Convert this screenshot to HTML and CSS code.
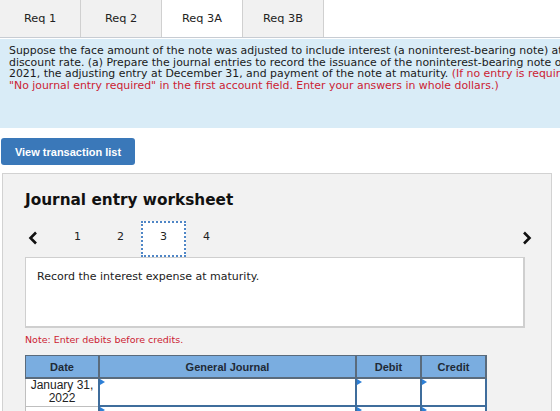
FILE: index.html
```html
<!DOCTYPE html>
<html lang="en">
<head>
  <meta charset="UTF-8" />
  <meta name="viewport" content="width=device-width, initial-scale=1" />
  <title>Journal entry worksheet</title>
  <link rel="stylesheet" href="styles.css">
</head>
<body>

  <!-- Pestañas de requisitos -->
  <div class="tabs">
    <div class="tab">Req 1</div>
    <div class="tab">Req 2</div>
    <div class="tab active">Req 3A</div>
    <div class="tab">Req 3B</div>
  </div>

  <!-- Enunciado -->
  <div class="question">
    <p>
      Suppose the face amount of the note was adjusted to include interest (a noninterest-bearing note) at a 12%<br />
      discount rate. (a) Prepare the journal entries to record the issuance of the noninterest-bearing note on January 1,<br />
      2021, the adjusting entry at December 31, and payment of the note at maturity. <span class="red">(If no entry is required for a transaction/event, select</span><br />
      <span class="red">"No journal entry required" in the first account field. Enter your answers in whole dollars.)</span>
    </p>
  </div>

  <button class="btn-list">View transaction list</button>

  <!-- Hoja de asientos -->
  <div class="worksheet">
    <h2>Journal entry worksheet</h2>

    <div class="pager">
      <span class="arrow">
        <svg width="10" height="14" viewBox="0 0 10 14"><polyline points="8,1.5 2.5,7 8,12.5" fill="none" stroke="#111" stroke-width="2.6"/></svg>
      </span>
      <span class="page">1</span>
      <span class="page">2</span>
      <span class="page current">3</span>
      <span class="page">4</span>
      <span class="spacer"></span>
      <span class="arrow">
        <svg width="10" height="14" viewBox="0 0 10 14"><polyline points="2,1.5 7.5,7 2,12.5" fill="none" stroke="#111" stroke-width="2.6"/></svg>
      </span>
    </div>

    <div class="instruction">Record the interest expense at maturity.</div>

    <div class="note">Note: Enter debits before credits.</div>

    <table class="journal">
      <thead>
        <tr>
          <th class="c-date">Date</th>
          <th class="c-account">General Journal</th>
          <th class="c-amount">Debit</th>
          <th class="c-amount">Credit</th>
        </tr>
      </thead>
      <tbody>
        <tr>
          <td class="date">January 31,<br />2022</td>
          <td class="field"></td>
          <td class="field"></td>
          <td class="field"></td>
        </tr>
        <tr>
          <td class="date">&nbsp;</td>
          <td class="field"></td>
          <td class="field"></td>
          <td class="field"></td>
        </tr>
      </tbody>
    </table>
  </div>

</body>
</html>
```

FILE: styles.css
```css
html, body {
  overflow: hidden;
}

body {
  margin: 0;
  padding: 0;
  background: white;
  font-family: 'DejaVu Sans', Verdana, sans-serif;
  color: #111;
}

/* Pestañas */
.tabs {
  display: flex;
  height: 37px;
  border-bottom: 1px solid #c7ccd3;
}

.tab {
  width: 80px;
  display: flex;
  justify-content: center;
  align-items: center;
  background: #f1f1f1;
  border-right: 1px solid #d0d0d0;
  font-size: 11.3px;
  color: #222;
}

.tab.active {
  background: white;
}

/* Enunciado */
.question {
  margin-top: 1px;
  height: 89px;
  background: #d9ecf7;
  padding: 0 9px;
  box-sizing: border-box;
  white-space: nowrap;
}

.question p {
  margin: 0;
  padding-top: 6px;
  font-size: 10.9px;
  line-height: 11.5px;
  color: #1a1a1a;
}

.red {
  color: #cc2233;
}

/* Botón */
.btn-list {
  display: block;
  margin: 10px 0 0 1px;
  width: 134px;
  height: 27px;
  background: #3a78b9;
  border: none;
  border-radius: 3px;
  color: white;
  font-family: 'Liberation Sans', Arial, sans-serif;
  font-weight: bold;
  font-size: 11px;
  padding: 0;
}

/* Hoja */
.worksheet {
  margin: 8px 0 0 2px;
  width: 550px;
  height: 300px;
  box-sizing: border-box;
  background: #f2f2f2;
  border: 1px solid #d2d2d2;
  padding: 0 0 0 22px;
}

.worksheet h2 {
  margin: 17px 0 0 0;
  font-size: 15.3px;
  line-height: 18px;
  font-weight: bold;
  color: #111;
}

.pager {
  display: flex;
  align-items: center;
  width: 507px;
  height: 36px;
  margin-top: 12px;
}

.arrow {
  display: flex;
  align-items: center;
  width: 10px;
  padding-bottom: 3px;
}

.pager .arrow:first-child {
  margin-left: 3px;
  margin-right: 18px;
}

.page {
  width: 43px;
  height: 36px;
  display: flex;
  justify-content: center;
  align-items: center;
  padding-bottom: 5px;
  font-size: 11px;
  color: #222;
  box-sizing: border-box;
}

.page.current {
  background: white;
  border: 2px dotted #4f86c6;
  width: 45px;
  margin: 0 -1px;
}

.spacer {
  flex: 1;
}

.instruction {
  width: 500px;
  height: 71px;
  box-sizing: border-box;
  background: white;
  border: 1px solid #cfcfcf;
  border-width: 1px 2px 2px 1px;
  padding: 12px 11px;
  font-size: 11px;
  color: #222;
}

.note {
  margin-top: 6px;
  font-size: 9.5px;
  color: #cc2233;
}

/* Tabla */
.journal {
  margin-top: 10px;
  width: 453px;
  border-collapse: collapse;
  font-family: 'Liberation Sans', Arial, sans-serif;
  table-layout: fixed;
}

.journal th {
  height: 21px;
  padding: 0;
  background: #7aade0;
  border: 1px solid #5a6b7c;
  border-width: 1px 2px 2px 1px;
  font-size: 11px;
  font-weight: bold;
  color: #1f2a36;
}

.c-date { width: 72px; }
.c-account { width: 255px; }
.c-amount { width: 63px; }

.journal td {
  height: 26px;
  padding: 0;
  background: white;
}

.journal td.date {
  border: 1px solid #bfbfbf;
  text-align: center;
  font-size: 12px;
  line-height: 13px;
  color: #222;
}

.journal td.field {
  border: 2px solid #3f6d9c;
  position: relative;
}

/* Marca azul en cada campo */
.journal td.field::before {
  content: '';
  position: absolute;
  top: 0;
  left: 0;
  border-top: 3px solid transparent;
  border-bottom: 3px solid transparent;
  border-left: 5px solid #2d7fd6;
}
```
